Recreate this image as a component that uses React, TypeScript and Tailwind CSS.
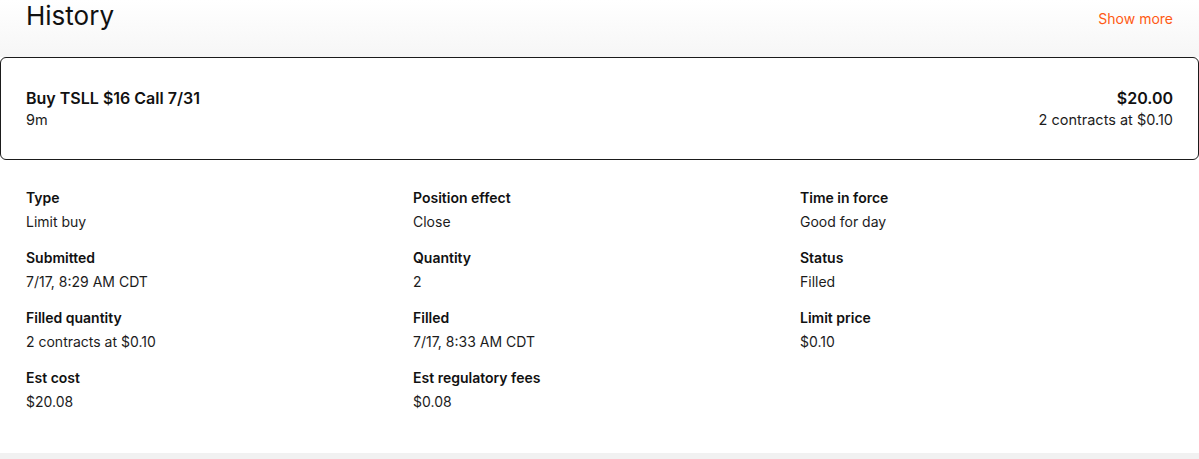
import React from 'react';

type Field = { label: string; value: string };

const fields: Field[] = [
    { label: 'Type', value: 'Limit buy' },
    { label: 'Position effect', value: 'Close' },
    { label: 'Time in force', value: 'Good for day' },
    { label: 'Submitted', value: '7/17, 8:29 AM CDT' },
    { label: 'Quantity', value: '2' },
    { label: 'Status', value: 'Filled' },
    { label: 'Filled quantity', value: '2 contracts at $0.10' },
    { label: 'Filled', value: '7/17, 8:33 AM CDT' },
    { label: 'Limit price', value: '$0.10' },
    { label: 'Est cost', value: '$20.08' },
    { label: 'Est regulatory fees', value: '$0.08' },
];

function DetailItem({ label, value }: Field) {
    return (
        <div className="flex flex-col h-[60px]">
            <span className="text-[14px] leading-[20px] font-semibold text-[#111]">{label}</span>
            <span className="text-[14px] leading-[20px] mt-[4px] text-[#1c1c1c]">{value}</span>
        </div>
    );
}

export default function App() {
    return (
        <div
            className="w-[1199px] h-[459px] bg-white flex flex-col overflow-hidden"
            style={{ fontFamily: 'Inter, "Liberation Sans", sans-serif' }}
        >
            <div className="h-[57px] flex items-start justify-between px-[26px] bg-gradient-to-b from-white to-[#f6f6f6]">
                <h1 className="text-[26px] leading-[32px] text-[#111] font-normal">History</h1>
                <button className="text-[14px] leading-[20px] mt-[9px] text-[#ff5a13]">Show more</button>
            </div>

            <div className="h-[103px] border-[1.5px] border-[#1b1b1b] rounded-[6px] bg-white flex items-center justify-between pl-[25px] pr-[25px]">
                <div className="flex flex-col">
                    <span className="text-[16px] leading-[22px] font-semibold text-[#111]">Buy TSLL $16 Call 7/31</span>
                    <span className="text-[14.5px] leading-[21px] text-[#1c1c1c]">9m</span>
                </div>
                <div className="flex flex-col items-end">
                    <span className="text-[16px] leading-[22px] font-semibold text-[#111]">$20.00</span>
                    <span className="text-[14.5px] leading-[21px] text-[#1c1c1c]">2 contracts at $0.10</span>
                </div>
            </div>

            <div className="grid grid-cols-[387px_387px_1fr] content-start px-[26px] pt-[28px] flex-1">
                {fields.map((f) => (
                    <DetailItem key={f.label} label={f.label} value={f.value} />
                ))}
            </div>

            <div className="h-[6px] bg-[#f1f1f1]" />
        </div>
    );
}
